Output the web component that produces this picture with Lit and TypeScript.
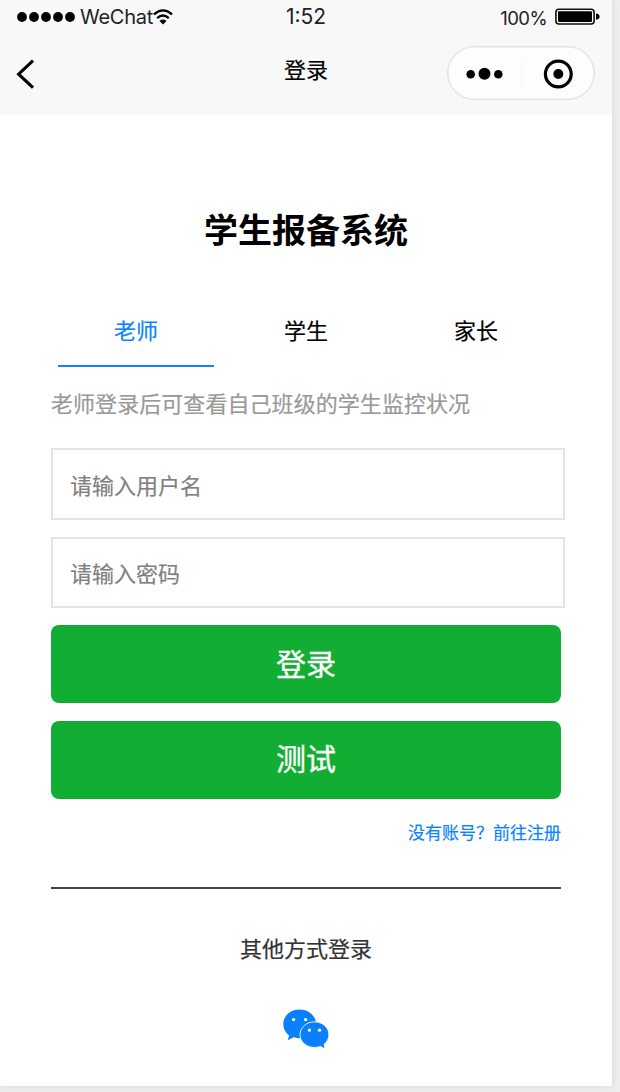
import { LitElement, html, svg, css } from "lit";
import { customElement, state } from "lit/decorators.js";

const TABS = ["老师", "学生", "家长"];

const signalDot = (x: number) => svg`<circle cx=${x} cy="6" r="4.9" />`;

@customElement("status-bar")
class StatusBar extends LitElement {
  static styles = css`
    :host {
      display: grid; grid-template-columns: 1fr auto 1fr; box-sizing: border-box; height: 34px;
      padding: 1px 0; align-items: center; color: #222;
    }
    .side { display: flex; align-items: center; height: 32px; }
    .left { padding-left: 17px; }
    .right { justify-content: flex-end; padding-right: 12px; }
    .carrier { font-size: 20px; line-height: 30px; margin: 0 0 0 5px; letter-spacing: -0.25px; }
    .time { font-size: 21px; line-height: 30px; }
    .pct { font-size: 18.5px; line-height: 30px; margin: 2px 8px 0 0; letter-spacing: -0.6px; }
    svg { display: block; flex: none; }
  `;
  render() {
    return html`
      <div class="side left">
        <svg width="58" height="12" viewBox="0 0 58 12">
          ${[5, 17, 29, 41, 53].map((x) => signalDot(x))}
        </svg>
        <span class="carrier">WeChat</span>
        <svg width="20" height="16" viewBox="0 0 20 16">
          <g fill="none" stroke="#000" stroke-width="2.3">
            <path d="M.9 5.3Q10-2.5 19.1 5.3" />
            <path d="M4.2 9.1Q10 3.9 15.8 9.1" />
          </g>
          <path d="M6.5 12Q10 9.2 13.5 12L10 15.5Z" />
        </svg>
      </div>
      <span class="time">1:52</span>
      <div class="side right">
        <span class="pct">100%</span>
        <svg width="45" height="18" viewBox="0 0 45 18">
          <rect x=".9" y="1.2" width="38.2" height="14.8" rx="3" fill="none" stroke="#111" stroke-width="1.6" />
          <rect x="3" y="3.3" width="34" height="10.6" rx="1" />
          <path d="M41 5.4Q44.6 5.8 44.6 8.6T41 11.8Z" />
        </svg>
      </div>
    `;
  }
}

@customElement("nav-bar")
class NavBar extends LitElement {
  static styles = css`
    :host { display: grid; grid-template-columns: 1fr auto 1fr; height: 80px; align-items: start; }
    svg { display: block; }
    .back { margin: 25px 0 0 16px; }
    .title { font-size: 22px; line-height: 30px; margin-top: 21px; color: #000; -webkit-text-stroke: 0.2px; }
    .capsule {
      box-sizing: border-box; justify-self: end; width: 148px; height: 54px; margin: 12px 17px 0 0;
      border: 1px solid #e2e2e2; border-radius: 27px; background: #fdfdfd; padding-top: 1px;
      box-shadow: inset 0 0 0 0.6px #e6e6e6;
      display: grid; grid-template-columns: 1fr 1px 1fr; align-items: center; justify-items: center;
    }
    .sep { width: 1px; height: 30px; background: #f8f8f8; }
  `;
  render() {
    return html`
      <svg class="back" width="20" height="30" viewBox="0 0 20 30">
        <path d="M17 1.7L2.6 15.2L17 28.6" fill="none" stroke="#000" stroke-width="3.1" />
      </svg>
      <span class="title">登录</span>
      <div class="capsule">
        <svg width="38" height="14" viewBox="0 0 38 14">
          <circle cx="5.7" cy="7.3" r="4.3" /><circle cx="19.5" cy="6.8" r="6" /><circle cx="33.3" cy="7.3" r="4.3" />
        </svg>
        <span class="sep"></span>
        <svg width="30" height="30" viewBox="0 0 30 30">
          <circle cx="15.3" cy="15" r="12.9" fill="none" stroke="#000" stroke-width="3.2" />
          <circle cx="15.3" cy="15" r="5" />
        </svg>
      </div>
    `;
  }
}

@customElement("app-root")
class AppRoot extends LitElement {
  static styles = css`
    :host {
      display: block; box-sizing: border-box; width: 620px; height: 1092px; overflow: hidden;
      background: #eeeeee; font-family: Inter, "Noto Sans CJK SC", sans-serif;
    }
    .page { width: 612px; height: 1086px; background: #fff; box-shadow: 0 0 8px rgba(0, 0, 0, 0.09); }
    .header { height: 114px; background: #f8f8f8; }
    .content {
      width: 510px; margin: 0 auto; display: flex; flex-direction: column;
      font-family: "Noto Sans CJK SC", sans-serif;
    }
    h1 { margin: 90px 0 0; font-size: 34px; line-height: 50px; font-weight: 700; text-align: center; color: #000; }
    .tabs { display: grid; grid-template-columns: repeat(3, 1fr); margin-top: 42px; }
    .tab {
      box-sizing: border-box; height: 71px; margin: 0 7px; padding-top: 18px;
      border-bottom: 2px solid transparent; text-align: center; font-size: 22px; line-height: 30px; color: #000;
      cursor: pointer; -webkit-text-stroke: 0.2px;
    }
    .tab.active { color: #0a84ff; border-color: #0a84ff; }
    .desc {
      margin: 20px 0 0; font-size: 22px; line-height: 30px; color: #999; white-space: nowrap;
      letter-spacing: 0.06px; -webkit-text-stroke: 0.2px;
    }
    .field {
      box-sizing: border-box; width: 514px; height: 72px; margin: 31px 0 0; padding: 0 17px 1px;
      border: 2px solid #e4e4e4; border-radius: 0; outline: none; background: #fff;
      font: 22px "Noto Sans CJK SC", sans-serif; color: #000;
    }
    .field + .field { margin-top: 17px; height: 71px; }
    .field::placeholder { color: #808080; opacity: 1; -webkit-text-stroke: 0.2px; }
    .btn {
      all: unset; box-sizing: border-box; height: 78px; margin-top: 17px; padding-bottom: 3px; border-radius: 8px;
      background: #12ae33; color: #fff; font-size: 30px; line-height: 75px; text-align: center; cursor: pointer;
      -webkit-text-stroke: 0.35px;
    }
    .btn + .btn { margin-top: 18px; padding-bottom: 5px; line-height: 73px; }
    .link {
      align-self: flex-end; margin-top: 20px; font-size: 17px; line-height: 26px; color: #0a84ff;
      white-space: nowrap; -webkit-text-stroke: 0.2px;
    }
    .rule { height: 2px; margin-top: 42px; background: #444; }
    .other {
      margin-top: 43px; font-size: 22px; line-height: 30px; text-align: center; color: #333;
      -webkit-text-stroke: 0.2px;
    }
    .wechat { display: block; align-self: center; margin-top: 47px; }
  `;

  @state() private active = 0;

  render() {
    return html`
      <div class="page">
        <div class="header">
          <status-bar></status-bar>
          <nav-bar></nav-bar>
        </div>
        <div class="content">
          <h1>学生报备系统</h1>
          <div class="tabs" role="tablist">
            ${TABS.map(
              (t, i) => html`<div role="tab" class="tab ${i === this.active ? "active" : ""}" @click=${() => (this.active = i)}>${t}</div>`
            )}
          </div>
          <p class="desc">老师登录后可查看自己班级的学生监控状况</p>
          <input class="field" placeholder="请输入用户名" />
          <input class="field" type="password" placeholder="请输入密码" />
          <button class="btn">登录</button>
          <button class="btn">测试</button>
          <span class="link">没有账号？前往注册</span>
          <div class="rule"></div>
          <div class="other">其他方式登录</div>
          <svg class="wechat" width="46" height="40" viewBox="0 0 46 40" fill="#0a80ff">
            <path d="M16.5.5C7.5.5.3 6.8.3 15c0 5 2.2 8.7 5.8 11.4L4.7 31.2L10.7 28.3Q14 29.3 18 29.2L33 13C31.5 5.8 25 .5 16.5.5Z" />
            <path d="M31.5 12.8C23.5 12.8 17 18.5 17 25.7S23.5 38.5 31.5 38.5Q34.5 38.5 37.3 37.5L42 39.8L41.3 35.2C44.2 32.8 45.9 29.5 45.9 25.7C45.9 18.5 39.5 12.8 31.5 12.8Z" stroke="#fff" stroke-width=".9" />
            <g fill="#fff">
              <circle cx="10.6" cy="10.6" r="1.7" /><circle cx="22.6" cy="10.6" r="1.7" />
              <circle cx="26.4" cy="21.2" r="1.6" /><circle cx="36.5" cy="21.2" r="1.6" />
            </g>
          </svg>
        </div>
      </div>
    `;
  }
}
